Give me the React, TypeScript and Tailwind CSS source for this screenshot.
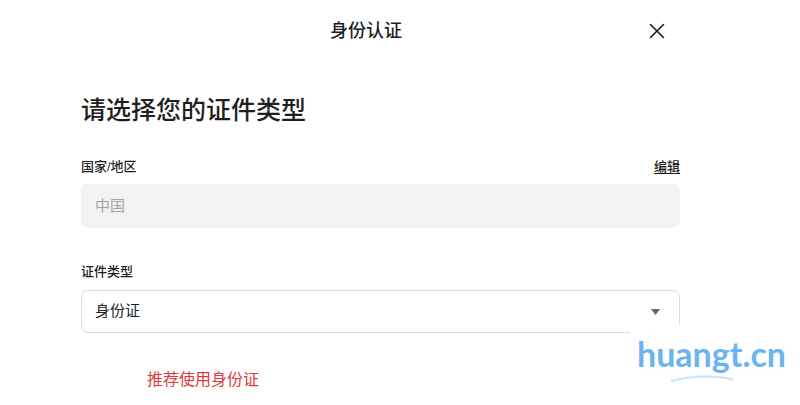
import React from "react"

export default function App() {
  return (
    <div className="relative w-[800px] h-[405px] overflow-hidden bg-white text-[#1f1f1f] font-['Liberation_Sans','Noto_Sans_CJK_SC',sans-serif]">
      {/* Header */}
      <div className="flex items-center h-[62px] pl-[330px] pr-[135px] justify-between">
        <h1 className="text-[18px] font-medium leading-none">身份认证</h1>
        <button className="w-[16px] h-[16px] flex items-center justify-center">
          <svg width="16" height="16" viewBox="0 0 16 16" fill="none">
            <path d="M1.5 1.5L14.5 14.5M14.5 1.5L1.5 14.5" stroke="#1a1a1a" strokeWidth="1.6" strokeLinecap="round" />
          </svg>
        </button>
      </div>

      <div className="ml-[81px] w-[599px]">
        <h2 className="mt-[31px] text-[25px] leading-[35px] font-medium">请选择您的证件类型</h2>

        {/* Country */}
        <div className="mt-[30px] flex items-center justify-between text-[13px] leading-[18px] font-medium">
          <span>国家/地区</span>
          <button className="underline underline-offset-2">编辑</button>
        </div>
        <div className="mt-[8px] h-[44px] rounded-[7px] bg-[#f2f2f2] flex items-center px-[14px] text-[15px] text-[#a3a3a3]">
          中国
        </div>

        {/* Document type */}
        <div className="mt-[35px] text-[13px] leading-[18px] font-medium">证件类型</div>
        <div className="mt-[9px] h-[43px] rounded-[7px] border border-[#dcdcdc] flex items-center justify-between pl-[13px] pr-[19px] text-[15px] text-[#222]">
          <span>身份证</span>
          <svg width="9" height="6" viewBox="0 0 9 6">
            <path d="M0 0H9L4.5 6Z" fill="#666" />
          </svg>
        </div>

        <p className="mt-[36px] ml-[66px] text-[16px] leading-[22px] text-[#dc3a40]">推荐使用身份证</p>
      </div>

      {/* Watermark */}
      <div className="absolute left-[630px] top-[325px] w-[170px] h-[80px] bg-white">
        <div className="relative mt-[9px] ml-[7px] text-[34px] leading-[40px] font-bold text-[#6cb4f0] font-['Lato','Open_Sans',sans-serif]">
          huangt.cn
        </div>
        <svg className="absolute left-[40px] top-[50px]" width="64" height="8" viewBox="0 0 64 8">
          <path d="M2 6C18 1 42 0 62 4" stroke="#cfe5f8" strokeWidth="2.5" fill="none" strokeLinecap="round" />
        </svg>
      </div>
    </div>
  )
}
